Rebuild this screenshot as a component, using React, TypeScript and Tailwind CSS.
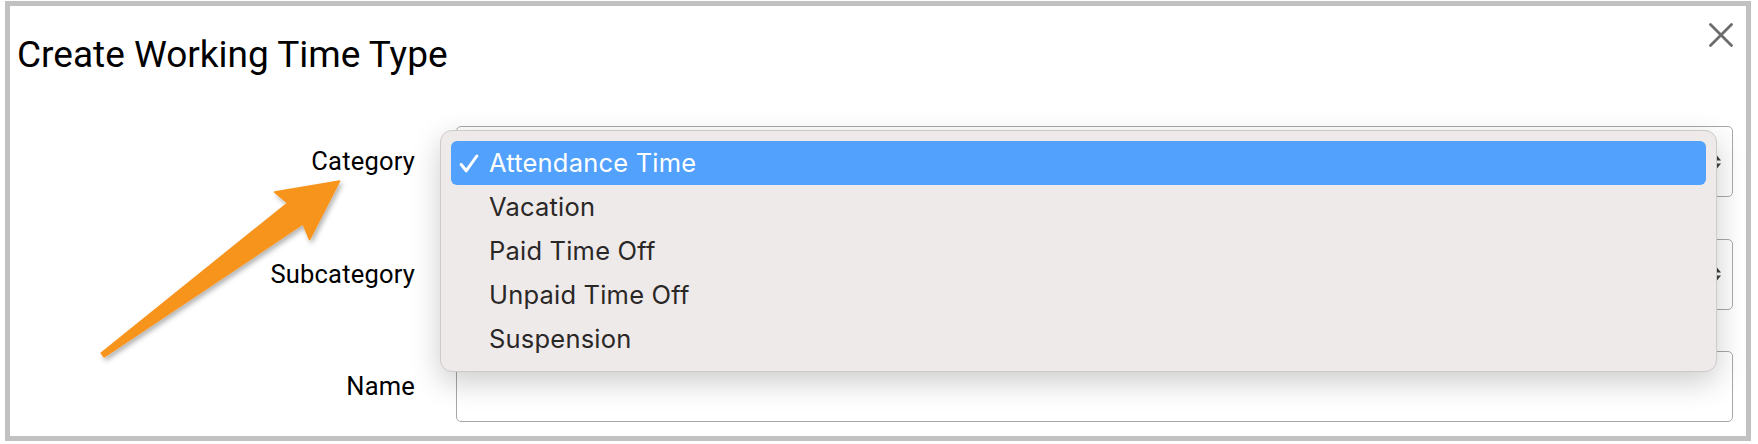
import { useState } from 'react'

const CATEGORIES = ['Attendance Time', 'Vacation', 'Paid Time Off', 'Unpaid Time Off', 'Suspension']

function UpDown() {
  return (
    <svg width="10" height="16" viewBox="0 0 10 16" className="absolute right-[10px] top-1/2 -translate-y-1/2">
      <path d="M1 6.5 L5 1.5 L9 6.5 Z" fill="#3f3f3f" />
      <path d="M1 9.5 L5 14.5 L9 9.5 Z" fill="#3f3f3f" />
    </svg>
  )
}

function Check() {
  return (
    <svg width="20" height="19" viewBox="0 0 20 19">
      <path d="M2.2 10.5 L7.2 16.8 L17.8 2" fill="none" stroke="white" strokeWidth="3" strokeLinecap="round" strokeLinejoin="round" />
    </svg>
  )
}

function CategoryMenu({ value, onPick }: { value: string; onPick: (v: string) => void }) {
  return (
    <div
      className="absolute left-[-17px] right-[15px] top-[3px] z-10 rounded-[12px] border border-[#cfcaca] bg-[#efeaea] p-[10px] shadow-[0_10px_30px_rgba(0,0,0,0.2)]"
      style={{ fontFamily: 'Inter, "Noto Sans", sans-serif' }}
    >
      {CATEGORIES.map(c => {
        const active = c === value
        return (
          <div
            key={c}
            onClick={() => onPick(c)}
            className={`flex h-[44px] items-center rounded-[6px] text-[25.5px] tracking-[0.2px] ${active ? 'bg-[#52a1fd] text-white' : 'text-[#2a2727]'}`}
          >
            <span className="flex w-[38px] shrink-0 justify-start pl-[8px]">{active && <Check />}</span>
            <span>{c}</span>
          </div>
        )
      })}
    </div>
  )
}

function Field({ children }: { children?: React.ReactNode }) {
  return (
    <div className="relative h-full flex-1 rounded-[5px] border border-[#a8a8a8] bg-white">
      {children}
    </div>
  )
}

function Row({ label, children }: { label: string; children: React.ReactNode }) {
  return (
    <div className="flex h-[71px] items-center gap-[41px]">
      <label className="w-[405px] shrink-0 text-right text-[25.5px] tracking-[0.2px] text-black">{label}</label>
      {children}
    </div>
  )
}

export default function App() {
  const [category, setCategory] = useState('Attendance Time')

  return (
    <div
      className="relative h-[444px] w-[1758px] bg-white pl-[5px] pt-[1px]"
      style={{ fontFamily: 'Roboto, "Liberation Sans", sans-serif' }}
    >
      <div className="flex h-[440px] w-[1746px] flex-col border-[5px] border-[#c1c1c1] bg-white">
        {/* header */}
        <div className="flex items-start justify-between pl-[7px] pr-[13px]">
          <h1 className="mt-[27px] text-[37px] leading-[44px] text-black">Create Working Time Type</h1>
          <button className="mt-[17px] h-[24px] w-[24px]">
            <svg width="24" height="24" viewBox="0 0 24 24">
              <path d="M1.5 1.5 L22.5 22.5 M22.5 1.5 L1.5 22.5" stroke="#6c6c6c" strokeWidth="2.8" strokeLinecap="round" />
            </svg>
          </button>
        </div>

        {/* form */}
        <div className="mt-[49px] flex flex-col gap-[41.5px] pr-[13px]">
          <Row label="Category">
            <Field>
              <UpDown />
              <CategoryMenu value={category} onPick={setCategory} />
            </Field>
          </Row>
          <Row label="Subcategory">
            <Field>
              <UpDown />
            </Field>
          </Row>
          <Row label="Name">
            <Field />
          </Row>
        </div>
      </div>

      {/* orange pointer */}
      <svg width="1758" height="444" className="pointer-events-none absolute left-0 top-0 z-20">
        <defs>
          <filter id="arrowShadow" x="-10%" y="-10%" width="130%" height="130%">
            <feDropShadow dx="2" dy="3" stdDeviation="2.5" floodColor="#000" floodOpacity="0.3" />
          </filter>
        </defs>
        <polygon
          points="101.2,353 287.6,203 274.6,192.1 339.7,181 309.6,239.7 303,224 104.2,357"
          fill="#f7941e"
          stroke="#f7941e"
          strokeWidth="1.5"
          strokeLinejoin="round"
          filter="url(#arrowShadow)"
        />
      </svg>
    </div>
  )
}
